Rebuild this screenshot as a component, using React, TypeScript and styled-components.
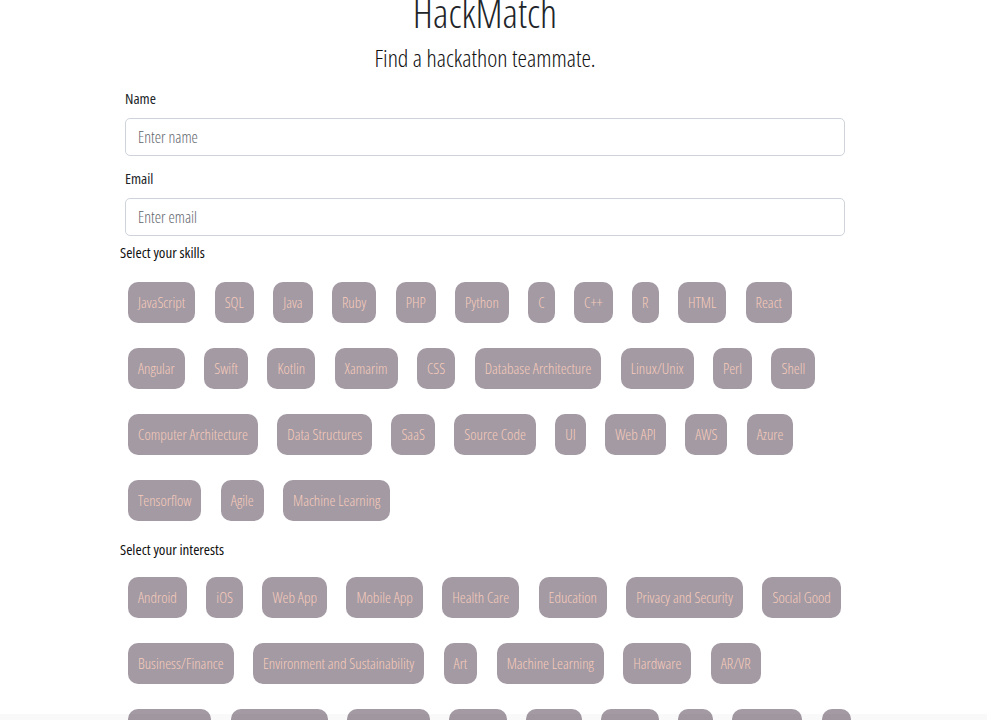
import React from "react";
import styled, { createGlobalStyle } from "styled-components";

const GlobalStyle = createGlobalStyle`
  html, body {
    margin: 0;
    padding: 0;
    background: #ffffff;
  }
  body {
    font-family: "Open Sans", "Liberation Sans", sans-serif;
    font-stretch: 75%;
    color: #212529;
    overflow: hidden;
  }
`;

const Page = styled.div`
  width: 970px;
`;

const Container = styled.main`
  width: 720px;
  margin: 0 auto;
  display: flex;
  flex-direction: column;
`;

const Title = styled.h1`
  margin: -12px 0 0;
  font-size: 40px;
  line-height: 50px;
  font-weight: 300;
  text-align: center;
  color: #212529;
`;

const Subtitle = styled.h2`
  margin: 5px 0 0;
  font-size: 24px;
  line-height: 30px;
  font-weight: 300;
  text-align: center;
  color: #111;
`;

const FieldLabel = styled.label<{ $top: number }>`
  display: block;
  margin-top: ${(p) => p.$top}px;
  font-size: 15px;
  line-height: 20px;
  color: #212529;
`;

const TextInput = styled.input`
  box-sizing: border-box;
  margin-top: 10px;
  width: 720px;
  height: 38px;
  padding: 0 12px;
  border: 1px solid #ced4da;
  border-radius: 5px;
  font-family: inherit;
  font-stretch: 75%;
  font-size: 16px;
  font-weight: 300;
  color: #495057;
  background: #fff;
  outline: none;
  &::placeholder {
    color: #5f666d;
  }
`;

const SectionLabel = styled.div<{ $top: number }>`
  margin: ${(p) => p.$top}px 0 0 -5px;
  font-size: 15px;
  line-height: 20px;
  color: #111;
`;

const ChipBlock = styled.div<{ $top: number }>`
  margin-top: ${(p) => p.$top}px;
  padding-left: 3px;
  display: flex;
  flex-direction: column;
  row-gap: 25px;
`;

const ChipRow = styled.div`
  display: flex;
  column-gap: 19.4px;
`;

const Chip = styled.button`
  height: 41px;
  padding: 0 10px;
  border: none;
  border-radius: 10px;
  background: #a39aa3;
  color: #f8cbbb;
  font-family: inherit;
  font-stretch: 75%;
  font-size: 15px;
  font-weight: 300;
  line-height: 41px;
  white-space: nowrap;
  cursor: pointer;
`;

const BottomShade = styled.div`
  position: fixed;
  left: 0;
  right: 0;
  bottom: 0;
  height: 6px;
  background: rgba(0, 0, 0, 0.025);
`;

const skills: string[][] = [
  ["JavaScript", "SQL", "Java", "Ruby", "PHP", "Python", "C", "C++", "R", "HTML", "React"],
  ["Angular", "Swift", "Kotlin", "Xamarim", "CSS", "Database Architecture", "Linux/Unix", "Perl", "Shell"],
  ["Computer Architecture", "Data Structures", "SaaS", "Source Code", "UI", "Web API", "AWS", "Azure"],
  ["Tensorflow", "Agile", "Machine Learning"],
];

const interests: string[][] = [
  ["Android", "iOS", "Web App", "Mobile App", "Health Care", "Education", "Privacy and Security", "Social Good"],
  ["Business/Finance", "Environment and Sustainability", "Art", "Machine Learning", "Hardware", "AR/VR"],
  ["Open Source", "Social Networks", "Social Media", "Gaming", "Fintech", "Fashion", "IoT", "Food Tech", "AI"],
];

function ChipGroup({ rows, top }: { rows: string[][]; top: number }) {
  return (
    <ChipBlock $top={top}>
      {rows.map((row, i) => (
        <ChipRow key={i}>
          {row.map((label) => (
            <Chip key={label} type="button">
              {label}
            </Chip>
          ))}
        </ChipRow>
      ))}
    </ChipBlock>
  );
}

export default function App() {
  return (
    <Page>
      <GlobalStyle />
      <Container>
        <Title>HackMatch</Title>
        <Subtitle>Find a hackathon teammate.</Subtitle>
        <FieldLabel $top={15} htmlFor="name">Name</FieldLabel>
        <TextInput id="name" placeholder="Enter name" />
        <FieldLabel $top={12} htmlFor="email">Email</FieldLabel>
        <TextInput id="email" placeholder="Enter email" />
        <SectionLabel $top={6}>Select your skills</SectionLabel>
        <ChipGroup rows={skills} top={20} />
        <SectionLabel $top={18}>Select your interests</SectionLabel>
        <ChipGroup rows={interests} top={18} />
      </Container>
      <BottomShade />
    </Page>
  );
}
